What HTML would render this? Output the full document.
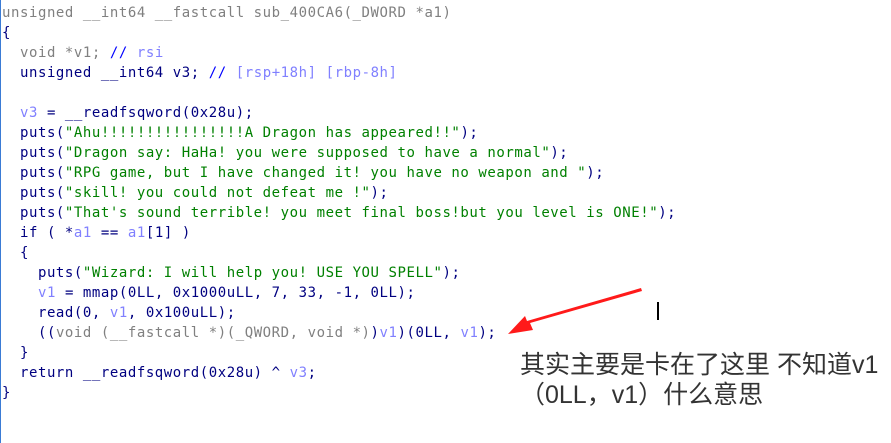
<!DOCTYPE html>
<html><head><meta charset="utf-8"><style>
body{margin:0;width:891px;height:443px;background:#fff;overflow:hidden;position:relative}
pre{margin:0;position:absolute;left:2px;top:3px;font-family:"DejaVu Sans Mono","Liberation Mono",monospace;font-size:14px;letter-spacing:0.56px;line-height:20px;color:#000080}
.g{color:#808080}.b{color:#0000ff}.l{color:#8080ff}.s{color:#008000}
.edge{position:absolute;left:0;top:0;width:1px;height:443px;background:#3a7bd5}
.cn{position:absolute;left:520px;top:350px;font-family:"Liberation Sans","Noto Sans CJK SC",sans-serif;font-size:25px;line-height:30px;color:#333;white-space:nowrap}
</style></head><body>
<div class="edge"></div>
<pre><span class="g">unsigned __int64 __fastcall sub_400CA6(_DWORD *a1)</span>
{
  <span class="g">void *v1;</span> <span class="b">//</span> <span class="l">rsi</span>
  unsigned __int64 v3; <span class="b">//</span> <span class="l">[rsp+18h] [rbp-8h]</span>

  <span class="l">v3</span> = __readfsqword(0x28u);
  puts(<span class="s">"Ahu!!!!!!!!!!!!!!!!A Dragon has appeared!!"</span>);
  puts(<span class="s">"Dragon say: HaHa! you were supposed to have a normal"</span>);
  puts(<span class="s">"RPG game, but I have changed it! you have no weapon and "</span>);
  puts(<span class="s">"skill! you could not defeat me !"</span>);
  puts(<span class="s">"That's sound terrible! you meet final boss!but you level is ONE!"</span>);
  if ( *<span class="l">a1</span> == <span class="l">a1</span>[1] )
  {
    puts(<span class="s">"Wizard: I will help you! USE YOU SPELL"</span>);
    <span class="l">v1</span> = mmap(0LL, 0x1000uLL, 7, 33, -1, 0LL);
    read(0, <span class="l">v1</span>, 0x100uLL);
    ((<span class="g">void (__fastcall *)(_QWORD, void *)</span>)<span class="l">v1</span>)(0LL, <span class="l">v1</span>);
  }
  return __readfsqword(0x28u) ^ <span class="l">v3</span>;
}</pre>
<svg style="position:absolute;left:0;top:0" width="891" height="443">
<polygon points="641,288 642,291 530,323 533,330 508,334 525,316 527,321" fill="#ff1a1a"/>
<rect x="657" y="302" width="2" height="18" fill="#000"/>
</svg>
<div class="cn">其实主要是卡在了这里 不知道v1<br>（0LL，v1）什么意思</div>
</body></html>
